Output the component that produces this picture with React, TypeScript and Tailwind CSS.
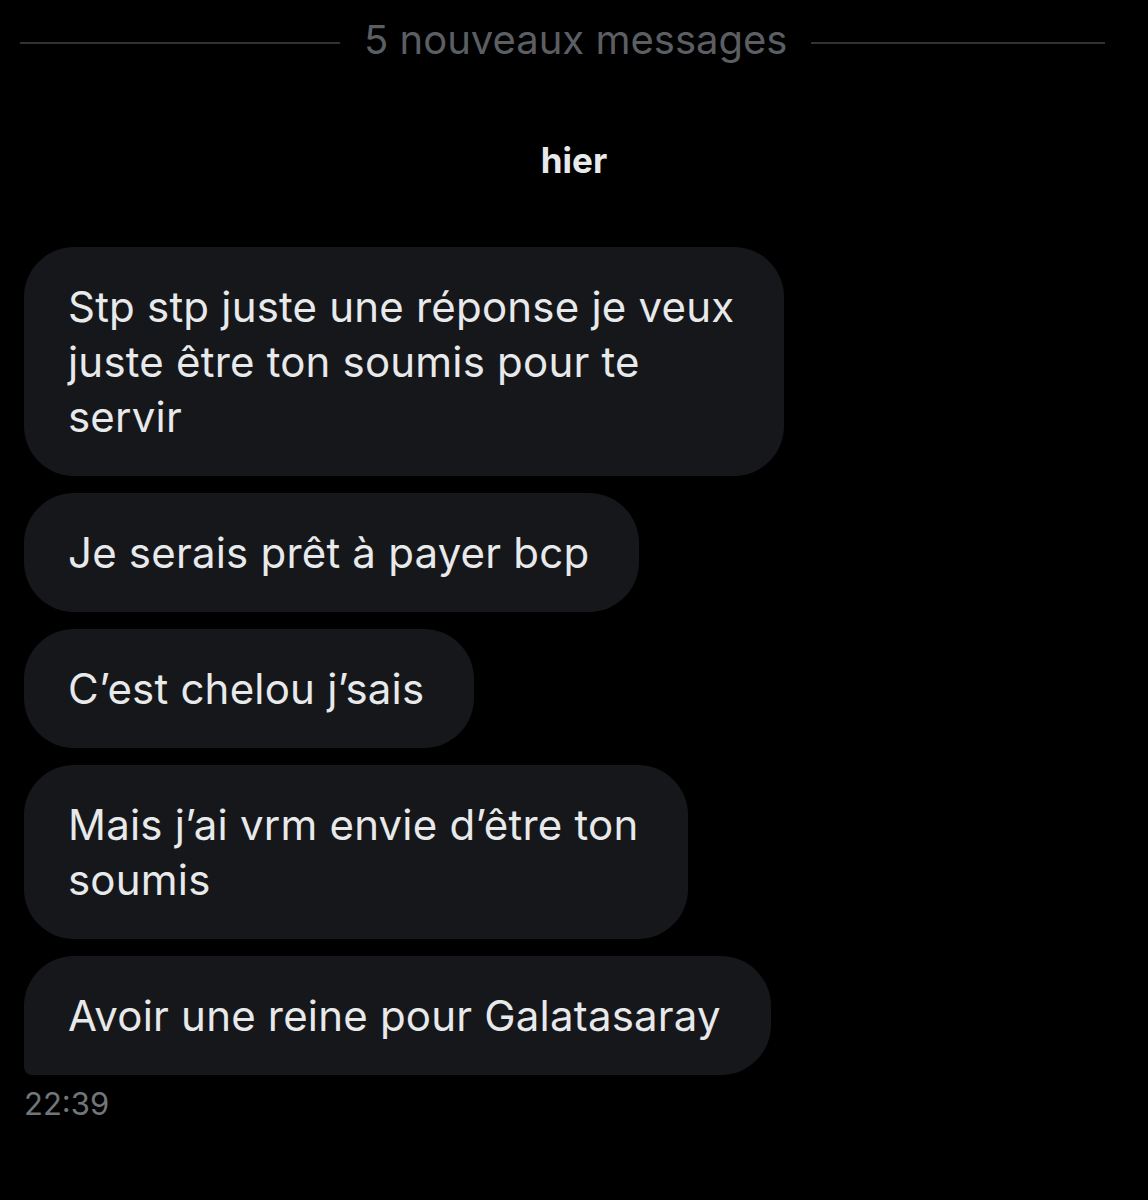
const messages = [
  ["Stp stp juste une réponse je veux", "juste être ton soumis pour te", "servir"],
  ["Je serais prêt à payer bcp"],
  ["C’est chelou j’sais"],
  ["Mais j’ai vrm envie d’être ton", "soumis"],
  ["Avoir une reine pour Galatasaray"],
];

export default function App() {
  return (
    <div
      className="min-h-[1200px] w-[1148px] bg-black text-[#e7e9ea]"
      style={{ fontFamily: "Inter, 'Noto Sans', sans-serif" }}
    >
      {/* new messages divider */}
      <div className="flex items-center gap-6 pl-5 pr-[43px] pt-[14px]">
        <div className="mt-[6px] h-[2px] w-[320px] bg-[#2f3336]" />
        <span className="text-[40px] leading-[52px] text-[#5b5e62]">5 nouveaux messages</span>
        <div className="mt-[6px] h-[2px] flex-1 bg-[#2f3336]" />
      </div>

      <div className="mt-[72px] text-center text-[35px] font-bold leading-[44px]">hier</div>

      <div className="mt-[65px] flex flex-col items-start gap-[17px] px-6">
        {messages.map((lines, i) => (
          <div
            key={i}
            className={
              i === messages.length - 1
                ? "rounded-[50px] rounded-bl-[8px] bg-[#16171a] pl-[44px] pr-[50px] py-[32px] text-[42px] leading-[55px] tracking-[0.2px]"
                : "rounded-[50px] bg-[#16171a] pl-[44px] pr-[50px] py-[32px] text-[42px] leading-[55px] tracking-[0.2px]"
            }
          >
            {lines.map((l, j) => (
              <div key={j} className="whitespace-nowrap">{l}</div>
            ))}
          </div>
        ))}
      </div>

      <div className="mt-[9px] px-6 text-[31px] leading-[40px] text-[#71767b]">22:39</div>
    </div>
  );
}
